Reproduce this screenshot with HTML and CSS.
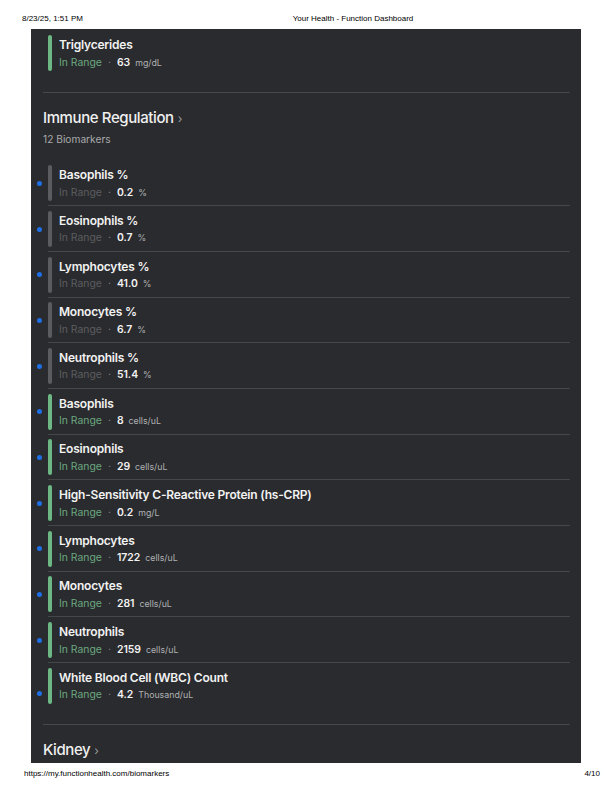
FILE: index.html
```html
<!DOCTYPE html>
<html>
<head>
<meta charset="utf-8">
<link rel="stylesheet" href="styles.css">
</head>
<body>
<header class="print-head">
  <span class="date">8/23/25, 1:51 PM</span>
  <span class="doc-title">Your Health - Function Dashboard</span>
</header>
<main class="panel">
  <div class="list first">
    <div class="item">
      <span class="dot hidden"></span>
      <div class="entry last">
        <span class="bar green"></span>
        <div class="text">
          <div class="name">Triglycerides</div>
          <div class="meta"><span class="status green">In Range</span><span class="sep">·</span><span class="val">63</span><span class="unit">mg/dL</span></div>
        </div>
      </div>
    </div>
  </div>

  <section class="section">
    <h2 class="sec-title">Immune Regulation<span class="chev">›</span></h2>
    <div class="count">12 Biomarkers</div>
    <div class="list">
      <div class="item"><span class="dot"></span><div class="entry"><span class="bar grey"></span><div class="text"><div class="name">Basophils %</div><div class="meta"><span class="status grey">In Range</span><span class="sep">·</span><span class="val">0.2</span><span class="unit">%</span></div></div></div></div>
      <div class="item"><span class="dot"></span><div class="entry"><span class="bar grey"></span><div class="text"><div class="name">Eosinophils %</div><div class="meta"><span class="status grey">In Range</span><span class="sep">·</span><span class="val">0.7</span><span class="unit">%</span></div></div></div></div>
      <div class="item"><span class="dot"></span><div class="entry"><span class="bar grey"></span><div class="text"><div class="name">Lymphocytes %</div><div class="meta"><span class="status grey">In Range</span><span class="sep">·</span><span class="val">41.0</span><span class="unit">%</span></div></div></div></div>
      <div class="item"><span class="dot"></span><div class="entry"><span class="bar grey"></span><div class="text"><div class="name">Monocytes %</div><div class="meta"><span class="status grey">In Range</span><span class="sep">·</span><span class="val">6.7</span><span class="unit">%</span></div></div></div></div>
      <div class="item"><span class="dot"></span><div class="entry"><span class="bar grey"></span><div class="text"><div class="name">Neutrophils %</div><div class="meta"><span class="status grey">In Range</span><span class="sep">·</span><span class="val">51.4</span><span class="unit">%</span></div></div></div></div>
      <div class="item"><span class="dot"></span><div class="entry"><span class="bar green"></span><div class="text"><div class="name">Basophils</div><div class="meta"><span class="status green">In Range</span><span class="sep">·</span><span class="val">8</span><span class="unit">cells/uL</span></div></div></div></div>
      <div class="item"><span class="dot"></span><div class="entry"><span class="bar green"></span><div class="text"><div class="name">Eosinophils</div><div class="meta"><span class="status green">In Range</span><span class="sep">·</span><span class="val">29</span><span class="unit">cells/uL</span></div></div></div></div>
      <div class="item"><span class="dot"></span><div class="entry"><span class="bar green"></span><div class="text"><div class="name">High-Sensitivity C-Reactive Protein (hs-CRP)</div><div class="meta"><span class="status green">In Range</span><span class="sep">·</span><span class="val">0.2</span><span class="unit">mg/L</span></div></div></div></div>
      <div class="item"><span class="dot"></span><div class="entry"><span class="bar green"></span><div class="text"><div class="name">Lymphocytes</div><div class="meta"><span class="status green">In Range</span><span class="sep">·</span><span class="val">1722</span><span class="unit">cells/uL</span></div></div></div></div>
      <div class="item"><span class="dot"></span><div class="entry"><span class="bar green"></span><div class="text"><div class="name">Monocytes</div><div class="meta"><span class="status green">In Range</span><span class="sep">·</span><span class="val">281</span><span class="unit">cells/uL</span></div></div></div></div>
      <div class="item"><span class="dot"></span><div class="entry"><span class="bar green"></span><div class="text"><div class="name">Neutrophils</div><div class="meta"><span class="status green">In Range</span><span class="sep">·</span><span class="val">2159</span><span class="unit">cells/uL</span></div></div></div></div>
      <div class="item"><span class="dot"></span><div class="entry last"><span class="bar green"></span><div class="text"><div class="name">White Blood Cell (WBC) Count</div><div class="meta"><span class="status green">In Range</span><span class="sep">·</span><span class="val">4.2</span><span class="unit">Thousand/uL</span></div></div></div></div>
    </div>
  </section>

  <section class="section">
    <h2 class="sec-title">Kidney<span class="chev">›</span></h2>
  </section>
</main>
<footer class="print-foot">
  <span>https://my.functionhealth.com/biomarkers</span>
  <span>4/10</span>
</footer>
</body>
</html>
```

FILE: styles.css
```css
* { box-sizing: border-box; }

html, body {
  margin: 0;
  padding: 0;
  background: #ffffff;
}

body {
  width: 612px;
  height: 792px;
  overflow: hidden;
  font-family: Inter, "Noto Sans", sans-serif;
}

.print-head {
  height: 28.5px;
  display: grid;
  grid-template-columns: 1fr auto 1fr;
  padding: 14px 24px 0 22px;
  font-family: "Liberation Sans", Arial, sans-serif;
  font-size: 8px;
  line-height: 10px;
  color: #000;
}

.print-head .doc-title {
  padding-left: 96px;
}

.panel {
  margin-left: 31px;
  width: 550px;
  height: 734.5px;
  overflow: hidden;
  background: #2a2b2e;
  padding: 0 11px 0 12px;
}

.list {
  margin-left: -6px;
}

.list.first {
  padding-top: 2px;
}

.item {
  display: flex;
  align-items: center;
}

.dot {
  width: 5px;
  height: 5px;
  border-radius: 50%;
  background: #1e70e6;
  margin-right: 6px;
  flex: none;
}

.dot.hidden {
  visibility: hidden;
}

.entry {
  flex: 1;
  display: flex;
  align-items: stretch;
  padding: 4.6px 0 4.1px;
  border-bottom: 1px solid #46474a;
}

.entry.last {
  border-bottom: none;
  padding-bottom: 20.5px;
}

.bar {
  width: 3.5px;
  height: 36px;
  border-radius: 2px;
  flex: none;
  margin-right: 7.5px;
}

.bar.green { background: #6cb784; }
.bar.grey { background: #5b5c5f; }

.text {
  display: flex;
  flex-direction: column;
  padding-top: 2px;
}

.name {
  font-size: 12px;
  font-weight: 600;
  color: #f2f2f2;
  line-height: 16px;
  letter-spacing: -0.2px;
}

.meta {
  margin-top: 2.5px;
  font-size: 10.4px;
  line-height: 14px;
  display: flex;
  align-items: baseline;
}

.status.green { color: #6aa880; }
.status.grey { color: #5c5d60; }

.sep {
  color: #8a8b8e;
  margin: 0 6px;
}

.val {
  color: #f2f2f2;
  font-weight: 600;
  margin-right: 5px;
}

.unit {
  color: #b0b1b4;
  font-size: 8.8px;
}

.section {
  border-top: 1px solid #46474a;
}

.sec-title {
  margin: 0;
  padding-top: 14px;
  font-size: 15px;
  font-weight: 500;
  line-height: 22px;
  color: #f0f0f0;
  letter-spacing: -0.4px;
}

.chev {
  color: #9a9b9e;
  font-size: 12px;
  font-weight: 400;
  margin-left: 4px;
}

.count {
  margin-top: 2px;
  font-size: 10.2px;
  line-height: 14px;
  color: #a8a9ac;
  padding-bottom: 15px;
}

.print-foot {
  position: absolute;
  top: 769px;
  left: 0;
  width: 612px;
  display: flex;
  justify-content: space-between;
  padding: 0 12px 0 24px;
  font-family: "Liberation Sans", Arial, sans-serif;
  font-size: 8px;
  line-height: 10px;
  color: #000;
}
```
